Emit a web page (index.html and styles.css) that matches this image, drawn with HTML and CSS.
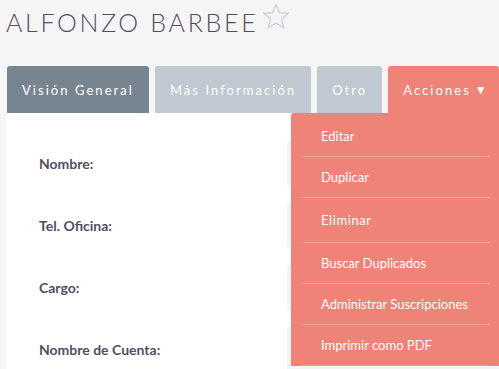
FILE: index.html
```html
<!DOCTYPE html>
<html lang="es">
<head>
    <title>Alfonzo Barbee</title>
    <link rel="stylesheet" href="styles.css">
</head>
<body>
    <!-- Record title -->
    <div class="title-row">
        <h1>ALFONZO BARBEE</h1>
        <svg class="star" width="28" height="26" viewBox="0 0 28 26">
            <polygon points="14,1.5 17.4,9.6 26.2,10.3 19.5,16 21.6,24.6 14,20 6.4,24.6 8.5,16 1.8,10.3 10.6,9.6" fill="none" stroke="#c9ced6" stroke-width="1.2" stroke-linejoin="miter"/>
        </svg>
    </div>

    <!-- Tabs -->
    <div class="tabs">
        <div class="tab tab-active">Visión General</div>
        <div class="tab">Más Información</div>
        <div class="tab">Otro</div>
        <div class="tab tab-actions">
            Acciones <span class="caret">&#9660;</span>
            <ul class="menu">
                <li>Editar</li>
                <li>Duplicar</li>
                <li class="spaced">Eliminar</li>
                <li>Buscar Duplicados</li>
                <li>Administrar Suscripciones</li>
                <li>Imprimir como PDF</li>
            </ul>
        </div>
    </div>

    <!-- Detail panel -->
    <div class="panel">
        <div class="row">
            <span class="label">Nombre:</span>
            <div class="field"></div>
        </div>
        <div class="row">
            <span class="label">Tel. Oficina:</span>
            <div class="field"></div>
        </div>
        <div class="row">
            <span class="label">Cargo:</span>
            <div class="field"></div>
        </div>
        <div class="row">
            <span class="label">Nombre de Cuenta:</span>
            <div class="field"></div>
        </div>
    </div>
</body>
</html>
```

FILE: styles.css
```css
/* Page */
body {
    margin: 0;
    padding: 0 0 0 6px;
    background-color: #f5f5f5;
    font-family: Lato, 'Open Sans', sans-serif;
    overflow: hidden;
}

/* Title */
.title-row {
    display: flex;
    align-items: flex-start;
    height: 66px;
}

h1 {
    margin: 6px 0 0 0;
    font-size: 25px;
    font-weight: 300;
    letter-spacing: 2.7px;
    line-height: 32px;
    color: #534d64;
}

.star {
    margin: 3px 0 0 4px;
}

/* Tabs */
.tabs {
    display: flex;
    gap: 6px;
    margin-left: 1px;
    height: 47px;
}

.tab {
    position: relative;
    display: flex;
    align-items: center;
    padding: 0 15px;
    background-color: #c0c9d1;
    color: #fff;
    font-size: 13px;
    letter-spacing: 2.05px;
    border-radius: 3px 3px 0 0;
    white-space: nowrap;
}

.tab-active {
    background-color: #778591;
}

.tab-actions {
    flex: 1;
    min-width: 0;
    background-color: #f08377;
}

.caret {
    font-size: 12px;
    margin-left: 4px;
}

/* Actions dropdown */
.menu {
    position: absolute;
    top: 47px;
    right: 0;
    width: 208px;
    margin: 0;
    padding: 3px 0 0 0;
    list-style: none;
    background-color: #f08377;
    border-radius: 3px 0 0 0;
    z-index: 2;
}

.menu li {
    height: 40px;
    line-height: 40px;
    margin: 0 10px;
    padding-left: 20px;
    border-bottom: 1px solid #f59f94;
    color: #fff;
    font-size: 13px;
    letter-spacing: 0;
}

.menu li.spaced {
    height: 44px;
    line-height: 44px;
    letter-spacing: 0.6px;
}

/* Detail panel */
.panel {
    background-color: #fff;
    padding: 27px 0 30px 33px;
    display: flex;
    flex-direction: column;
    gap: 15px;
}

.row {
    display: flex;
    align-items: center;
}

.label {
    width: 248px;
    font-size: 14px;
    font-weight: bold;
    color: #534d64;
}

.field {
    flex: 1;
    height: 47px;
    background-color: #f4f4f4;
    border-radius: 4px;
}
```
